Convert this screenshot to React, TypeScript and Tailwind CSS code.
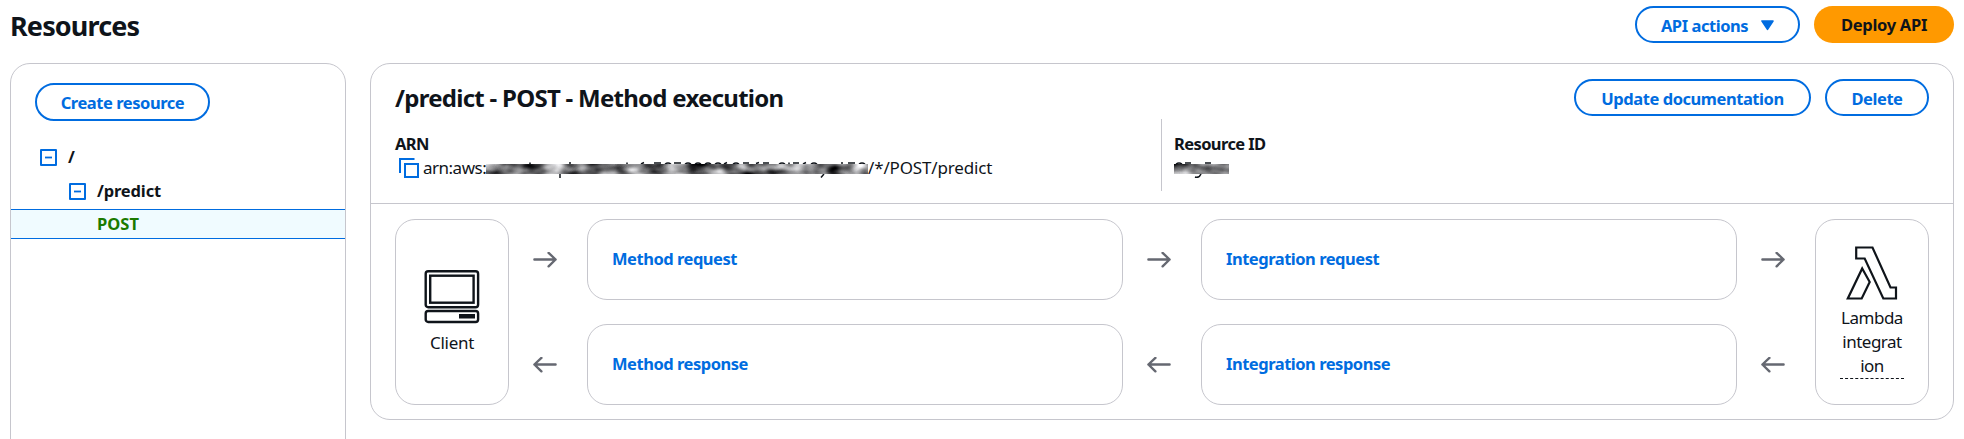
import React from "react";

const btn =
  "flex items-center justify-center border-2 border-[#006ce0] rounded-[20px] text-[#006ce0] font-bold tracking-[-0.45px] text-[16.5px] leading-[25px] bg-white whitespace-nowrap pt-px";

function Toggle() {
  return (
    <svg width="17" height="17" viewBox="0 0 17 17" className="shrink-0" fill="none" stroke="#006ce0">
      <rect x="1" y="1" width="15" height="15" strokeWidth="2" strokeLinejoin="round" />
      <path d="M5 8.5h7" strokeWidth="1.8" />
    </svg>
  );
}

function Arrow({ left = false }: { left?: boolean }) {
  return (
    <div className="flex w-[78px] items-center pl-6">
      <svg width="24" height="16" viewBox="0 0 24 16" fill="none" stroke="#656871" strokeWidth="2.4" strokeLinecap="round" strokeLinejoin="round" className={left ? "-scale-x-100" : ""}>
        <path d="M1.4 7.5H22.5M15.6 0.9L22.6 7.5L15.6 14.3" />
      </svg>
    </div>
  );
}

function Step({ label }: { label: string }) {
  return (
    <div className="flex h-[81px] flex-1 items-center rounded-[20px] border border-[#c6c6cd] pl-6 text-[16.5px] font-bold tracking-[-0.48px] text-[#006ce0]">
      {label}
    </div>
  );
}

function Smudge({ width, seed, marks }: { width: number; seed: number; marks: string }) {
  const id = "smudge" + seed;
  return (
    <svg width={width} height="18" className="mt-[2px] shrink-0">
      <filter id={id} x="0" y="0" width="100%" height="100%" colorInterpolationFilters="sRGB">
        <feTurbulence type="fractalNoise" baseFrequency="0.05 0.09" numOctaves="2" seed={seed} />
        <feColorMatrix values="1.6 0 0 0 -0.34  1.6 0 0 0 -0.34  1.6 0 0 0 -0.33  0 0 0 0 1" />
      </filter>
      <path d={marks} fill="none" stroke="#0f141a" strokeWidth="1.5" />
      <rect y="4" width={width} height="10" filter={`url(#${id})`} />
    </svg>
  );
}

export default function App() {
  return (
    <div className="h-[439px] w-[1964px] overflow-hidden bg-white font-['Noto_Sans',sans-serif] text-[17px] text-[#0f141a]">
      <header className="flex h-[63px] items-start px-[10px]">
        <h1 className="mt-[8px] flex-1 text-[27px] font-bold leading-[36px] tracking-[-0.85px]">Resources</h1>
        <div className="mt-[6px] flex gap-[14px]">
          <button className={`${btn} h-[37px] w-[165px] gap-[13px]`}>
            API actions
            <svg width="13" height="11" viewBox="0 0 13 11"><path d="M1 1H12L6.5 9.3Z" fill="#006ce0" stroke="#006ce0" strokeWidth="1.6" strokeLinejoin="round" /></svg>
          </button>
          <button className="h-[37px] w-[140px] rounded-[20px] bg-[#ff9900] pt-px text-[16.5px] font-bold tracking-[-0.3px]">Deploy API</button>
        </div>
      </header>
      <div className="flex items-start pl-[10px]">
        <aside className="h-[400px] w-[336px] rounded-t-[20px] border border-[#c6c6cd] pt-[19px]">
          <button className={`${btn} ml-6 h-[38px] w-[175px]`}>Create resource</button>
          <div className="mt-[19px] flex h-[34px] items-center gap-[11px] pl-[29px] text-[16.5px] font-bold"><Toggle />/</div>
          <div className="flex h-[34px] items-center gap-[11px] pl-[58px] text-[16.5px] font-bold tracking-[-0.15px]"><Toggle />/predict</div>
          <div className="mt-px flex h-[30px] items-center border-y border-[#006ce0] bg-[#f0fbff] pl-[86px] pt-px text-[16.5px] font-bold text-[#1a7a00]">POST</div>
        </aside>
        <main className="ml-6 h-[357px] w-[1584px] rounded-[20px] border border-[#c6c6cd]">
          <section className="h-[140px] border-b border-[#c6c6cd] px-6">
            <div className="flex justify-between pt-[15px]">
              <h2 className="mt-px text-[24px] font-bold leading-[36px] tracking-[-0.73px]">/predict - POST - Method execution</h2>
              <div className="flex gap-[14px]">
                <button className={`${btn} h-[37px] w-[237px]`}>Update documentation</button>
                <button className={`${btn} h-[37px] w-[104px]`}>Delete</button>
              </div>
            </div>
            <div className="flex pt-[3px]">
              <div className="w-[766px] pt-[13px]">
                <div className="text-[16.5px] font-bold leading-[24px] tracking-[-0.6px]">ARN</div>
                <div className="flex h-6 items-center whitespace-nowrap">
                  <svg width="20" height="20" viewBox="0 0 20 20" fill="none" stroke="#006ce0" strokeWidth="2" className="ml-1 mr-1 shrink-0">
                    <path d="M1 15V1H15.5" /><rect x="6" y="6" width="13" height="13" />
                  </svg>
                  <span className="w-[63px] tracking-[-0.5px]">arn:aws:</span>
                  <Smudge
                    width={382}
                    seed={4}
                    marks="M44 2.5V4M74 14V18M84 2V4M141 2.5V4M155 4L158 2.5M168 3H175M179 4Q182 2 185 4M188 3H195M199 4Q202 2 205 4M209 4Q212 2 215 4M219 4Q222 2 225 4M229 4Q232 2 235 4M238 4L241 2.5M247 4Q250 2 253 4M257 3H263M270 3.5L273 2.5M277 3H283M293 4Q296 2 299 4M303 2.5V4M307 3H313M317 4L320 2.5M325 4Q328 2 331 4M338 14L335 17.5M356 2V4M362 3H369M373 4Q376 2 379 4"
                  />
                  <span className="tracking-[-0.15px]">/*/POST/predict</span>
                </div>
              </div>
              <div className="h-[72px] border-l border-[#c6c6cd] pl-[12px] pt-[13px]">
                <div className="text-[16.5px] font-bold leading-[24px] tracking-[-0.6px]">Resource ID</div>
                <div className="flex h-6 items-center"><Smudge width={55} seed={9} marks="M2 4Q5 2 8 4M11 3H17M21 17Q25 18.5 27 14M31 3H37" /></div>
              </div>
            </div>
          </section>
          <section className="flex px-6 pt-[15px]">
            <div className="flex h-[186px] w-[114px] flex-col items-center rounded-[20px] border border-[#c6c6cd] pt-[50px]">
              <svg width="56" height="54" viewBox="0 0 56 54" fill="none" stroke="#0f141a" strokeWidth="2.4">
                <rect x="1.7" y="1.2" width="52.4" height="36" rx="2.5" /><rect x="6.2" y="5.7" width="43.4" height="27" />
                <rect x="1.7" y="41" width="52.4" height="11" rx="2.5" /><rect x="35" y="44" width="16" height="4.5" fill="#0f141a" stroke="none" />
              </svg>
              <div className="mt-[7px] leading-6 tracking-[-0.3px]">Client</div>
            </div>
            <div className="flex flex-1 flex-col gap-6">
              <div className="flex"><Arrow /><Step label="Method request" /><Arrow /><Step label="Integration request" /><Arrow /></div>
              <div className="flex"><Arrow left /><Step label="Method response" /><Arrow left /><Step label="Integration response" /><Arrow left /></div>
            </div>
            <div className="flex h-[186px] w-[114px] flex-col items-center rounded-[20px] border border-[#c6c6cd] pt-[26px]">
              <svg width="52" height="54" viewBox="0 0 52 54" fill="none" stroke="#0f141a" strokeWidth="2.2">
                <path d="M10.2 1.5H26.5L44.5 41.5H50V52.5H37.3L18.7 12.5H10.2ZM16.2 22.5L23.7 36L15.7 52.5H1.8Z" />
              </svg>
              <div className="mt-[6px] w-16 border-b border-dashed border-[#0f141a] text-center leading-6 tracking-[-0.5px]">Lambda<br />integrat<br />ion</div>
            </div>
          </section>
        </main>
      </div>
    </div>
  );
}
